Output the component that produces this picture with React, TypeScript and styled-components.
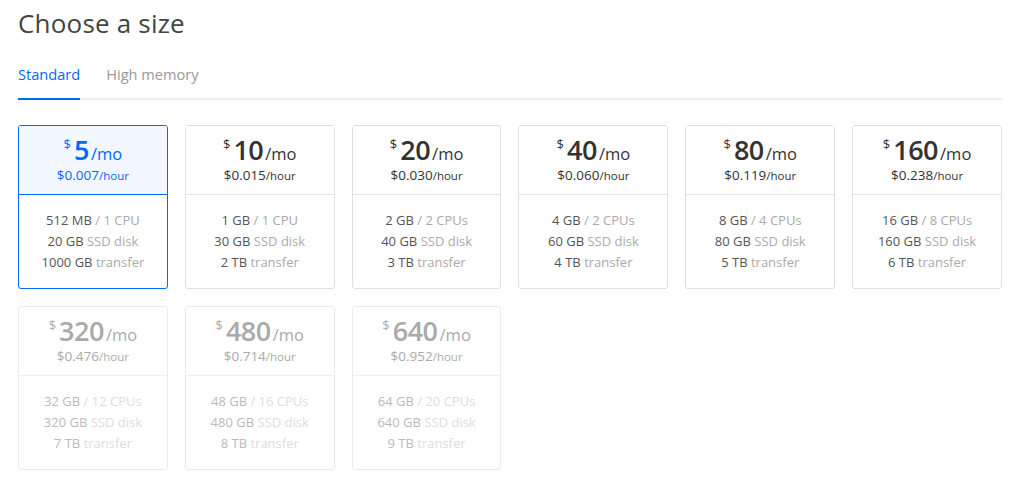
import React from "react";
import styled, { createGlobalStyle } from "styled-components";

const GlobalStyle = createGlobalStyle`
  body {
    margin: 0;
    background: #fff;
    font-family: "Open Sans", "Lato", sans-serif;
  }
`;

const Page = styled.div`
  width: 984px;
  padding: 0 0 0 18px;
`;

const Title = styled.h2`
  margin: 0;
  padding-top: 6px;
  font-size: 26px;
  font-weight: 400;
  color: #444;
  line-height: 34px;
  letter-spacing: 0.2px;
`;

const Tabs = styled.div`
  display: flex;
  gap: 26px;
  margin-top: 25px;
  border-bottom: 2px solid #eee;
`;

const Tab = styled.div<{ $active?: boolean }>`
  font-size: 14.6px;
  line-height: 18px;
  padding-bottom: 15px;
  margin-bottom: -2px;
  color: ${(p) => (p.$active ? "#0069ff" : "#999")};
  border-bottom: 2px solid ${(p) => (p.$active ? "#0069ff" : "transparent")};
`;

const Grid = styled.div`
  display: grid;
  grid-template-columns: repeat(6, 1fr);
  gap: 17px;
  margin-top: 25px;
`;

const Card = styled.div<{ $selected?: boolean; $disabled?: boolean }>`
  border: 1px solid
    ${(p) => (p.$selected ? "#0069ff" : p.$disabled ? "#ececec" : "#dfdfdf")};
  border-radius: 3px;
  height: 162px;
  display: flex;
  flex-direction: column;
  text-align: center;
  overflow: hidden;
`;

const Head = styled.div<{ $selected?: boolean; $disabled?: boolean }>`
  height: 68px;
  display: flex;
  flex-direction: column;
  align-items: center;
  justify-content: center;
  background: ${(p) => (p.$selected ? "#f3f8ff" : "#fff")};
  border-bottom: 1px solid
    ${(p) => (p.$selected ? "#0069ff" : p.$disabled ? "#f0f0f0" : "#e3e3e3")};
  color: ${(p) => (p.$selected ? "#0069ff" : p.$disabled ? "#aaa" : "#333")};
`;

const Price = styled.div`
  display: flex;
  align-items: baseline;
  line-height: 26px;
`;

const Dollar = styled.span`
  font-size: 13px;
  align-self: flex-start;
  margin-right: 3px;
  line-height: 14px;
`;

const Amount = styled.span`
  font-size: 27px;
  font-weight: 600;
  letter-spacing: -0.5px;
`;

const PerMonth = styled.span`
  font-size: 16.5px;
  margin-left: 2px;
`;

const Hourly = styled.div`
  font-size: 13.5px;
  line-height: 16px;
`;

const Small = styled.span`
  font-size: 11.5px;
`;

const Specs = styled.div`
  flex: 1;
  display: flex;
  flex-direction: column;
  justify-content: center;
  font-size: 13px;
  line-height: 21px;
`;

const Value = styled.span<{ $disabled?: boolean }>`
  color: ${(p) => (p.$disabled ? "#bbb" : "#555")};
`;

const Label = styled.span<{ $disabled?: boolean }>`
  color: ${(p) => (p.$disabled ? "#ddd" : "#aaa")};
`;

type Plan = {
  price: string;
  hour: string;
  mem: string;
  cpu: string;
  disk: string;
  transfer: string;
  disabled?: boolean;
};

const plans: Plan[] = [
  { price: "5", hour: "0.007", mem: "512 MB", cpu: "1 CPU", disk: "20 GB", transfer: "1000 GB" },
  { price: "10", hour: "0.015", mem: "1 GB", cpu: "1 CPU", disk: "30 GB", transfer: "2 TB" },
  { price: "20", hour: "0.030", mem: "2 GB", cpu: "2 CPUs", disk: "40 GB", transfer: "3 TB" },
  { price: "40", hour: "0.060", mem: "4 GB", cpu: "2 CPUs", disk: "60 GB", transfer: "4 TB" },
  { price: "80", hour: "0.119", mem: "8 GB", cpu: "4 CPUs", disk: "80 GB", transfer: "5 TB" },
  { price: "160", hour: "0.238", mem: "16 GB", cpu: "8 CPUs", disk: "160 GB", transfer: "6 TB" },
  { price: "320", hour: "0.476", mem: "32 GB", cpu: "12 CPUs", disk: "320 GB", transfer: "7 TB", disabled: true },
  { price: "480", hour: "0.714", mem: "48 GB", cpu: "16 CPUs", disk: "480 GB", transfer: "8 TB", disabled: true },
  { price: "640", hour: "0.952", mem: "64 GB", cpu: "20 CPUs", disk: "640 GB", transfer: "9 TB", disabled: true },
];

function SizeCard({ plan, selected }: { plan: Plan; selected?: boolean }) {
  const d = plan.disabled;
  return (
    <Card $selected={selected} $disabled={d}>
      <Head $selected={selected} $disabled={d}>
        <Price>
          <Dollar>$</Dollar>
          <Amount>{plan.price}</Amount>
          <PerMonth>/mo</PerMonth>
        </Price>
        <Hourly>
          ${plan.hour}
          <Small>/hour</Small>
        </Hourly>
      </Head>
      <Specs>
        <div>
          <Value $disabled={d}>{plan.mem}</Value> <Label $disabled={d}>/ {plan.cpu}</Label>
        </div>
        <div>
          <Value $disabled={d}>{plan.disk}</Value> <Label $disabled={d}>SSD disk</Label>
        </div>
        <div>
          <Value $disabled={d}>{plan.transfer}</Value> <Label $disabled={d}>transfer</Label>
        </div>
      </Specs>
    </Card>
  );
}

export default function App() {
  return (
    <Page>
      <GlobalStyle />
      <Title>Choose a size</Title>
      <Tabs>
        <Tab $active>Standard</Tab>
        <Tab>High memory</Tab>
      </Tabs>
      <Grid>
        {plans.map((p, i) => (
          <SizeCard key={p.price} plan={p} selected={i === 0} />
        ))}
      </Grid>
    </Page>
  );
}
